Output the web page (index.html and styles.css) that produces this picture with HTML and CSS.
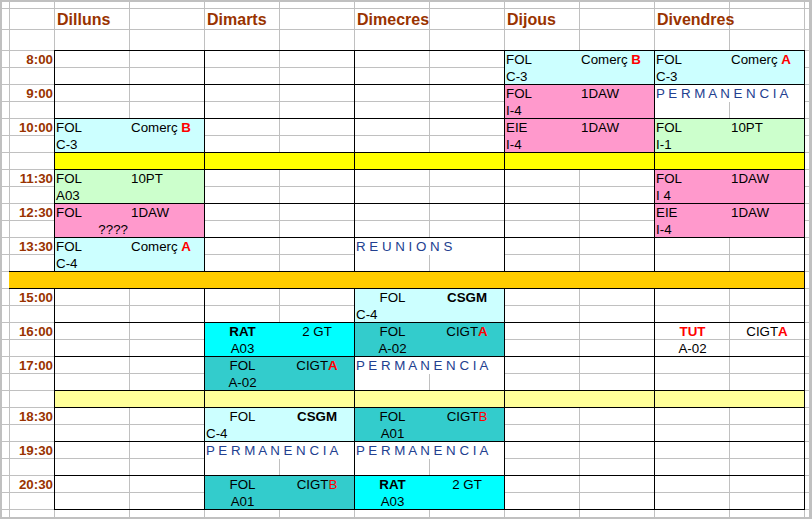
FILE: index.html
```html
<!DOCTYPE html>
<html lang="ca">
<head>
<meta charset="utf-8">
<title>Horari</title>
<link rel="stylesheet" href="styles.css">
</head>
<body>
<div class="sheet">
  <div class="days">
    <div class="day">Dilluns</div>
    <div class="day">Dimarts</div>
    <div class="day">Dimecres</div>
    <div class="day">Dijous</div>
    <div class="day">Divendres</div>
  </div>

  <div class="week">
    <!-- 8:00 -->
    <div class="time">8:00</div>
    <div class="slot"></div>
    <div class="slot"></div>
    <div class="slot"></div>
    <div class="slot lcyan"><span>FOL</span><span>Comerç <b class="r">B</b></span><span>C-3</span></div>
    <div class="slot lcyan"><span>FOL</span><span>Comerç <b class="r">A</b></span><span>C-3</span></div>

    <!-- 9:00 -->
    <div class="time">9:00</div>
    <div class="slot"></div>
    <div class="slot"></div>
    <div class="slot"></div>
    <div class="slot pink"><span>FOL</span><span>1DAW</span><span>I-4</span></div>
    <div class="slot"><span class="wide note">P E R M A N E N C I A</span></div>

    <!-- 10:00 -->
    <div class="time">10:00</div>
    <div class="slot lcyan"><span>FOL</span><span>Comerç <b class="r">B</b></span><span>C-3</span></div>
    <div class="slot"></div>
    <div class="slot"></div>
    <div class="slot pink"><span>EIE</span><span>1DAW</span><span>I-4</span></div>
    <div class="slot green"><span>FOL</span><span>10PT</span><span>I-1</span></div>

    <!-- pati -->
    <div class="time"></div>
    <div class="brk yellow"></div>
    <div class="brk yellow"></div>
    <div class="brk yellow"></div>
    <div class="brk yellow"></div>
    <div class="brk yellow"></div>

    <!-- 11:30 -->
    <div class="time">11:30</div>
    <div class="slot green"><span>FOL</span><span>10PT</span><span>A03</span></div>
    <div class="slot"></div>
    <div class="slot"></div>
    <div class="slot"></div>
    <div class="slot pink"><span>FOL</span><span>1DAW</span><span>I 4</span></div>

    <!-- 12:30 -->
    <div class="time">12:30</div>
    <div class="slot pink"><span>FOL</span><span>1DAW</span><span class="end">????</span></div>
    <div class="slot"></div>
    <div class="slot"></div>
    <div class="slot"></div>
    <div class="slot pink"><span>EIE</span><span>1DAW</span><span>I-4</span></div>

    <!-- 13:30 -->
    <div class="time">13:30</div>
    <div class="slot lcyan"><span>FOL</span><span>Comerç <b class="r">A</b></span><span>C-4</span></div>
    <div class="slot"></div>
    <div class="slot"><span class="wide note">R E U N I O N S</span></div>
    <div class="slot"></div>
    <div class="slot"></div>

    <!-- dinar -->
    <div class="lunch"></div>

    <!-- 15:00 -->
    <div class="time">15:00</div>
    <div class="slot"></div>
    <div class="slot"></div>
    <div class="slot lcyan"><span class="mid">FOL</span><span class="mid"><b>CSGM</b></span><span>C-4</span></div>
    <div class="slot"></div>
    <div class="slot"></div>

    <!-- 16:00 -->
    <div class="time">16:00</div>
    <div class="slot"></div>
    <div class="slot cyan"><span class="mid"><b>RAT</b></span><span class="mid">2 GT</span><span class="mid">A03</span></div>
    <div class="slot teal"><span class="mid">FOL</span><span class="mid">CIGT<b class="r">A</b></span><span class="mid">A-02</span></div>
    <div class="slot"></div>
    <div class="slot"><span class="mid"><b class="r">TUT</b></span><span class="mid">CIGT<b class="r">A</b></span><span class="mid">A-02</span></div>

    <!-- 17:00 -->
    <div class="time">17:00</div>
    <div class="slot"></div>
    <div class="slot teal"><span class="mid">FOL</span><span class="mid">CIGT<b class="r">A</b></span><span class="mid">A-02</span></div>
    <div class="slot"><span class="wide note">P E R M A N E N C I A</span></div>
    <div class="slot"></div>
    <div class="slot"></div>

    <!-- pati tarda -->
    <div class="time"></div>
    <div class="brk lyellow"></div>
    <div class="brk lyellow"></div>
    <div class="brk lyellow"></div>
    <div class="brk lyellow"></div>
    <div class="brk lyellow"></div>

    <!-- 18:30 -->
    <div class="time">18:30</div>
    <div class="slot"></div>
    <div class="slot lcyan"><span class="mid">FOL</span><span class="mid"><b>CSGM</b></span><span>C-4</span></div>
    <div class="slot teal"><span class="mid">FOL</span><span class="mid">CIGT<span class="r">B</span></span><span class="mid">A01</span></div>
    <div class="slot"></div>
    <div class="slot"></div>

    <!-- 19:30 -->
    <div class="time">19:30</div>
    <div class="slot"></div>
    <div class="slot"><span class="wide note">P E R M A N E N C I A</span></div>
    <div class="slot"><span class="wide note">P E R M A N E N C I A</span></div>
    <div class="slot"></div>
    <div class="slot"></div>

    <!-- 20:30 -->
    <div class="time">20:30</div>
    <div class="slot"></div>
    <div class="slot teal"><span class="mid">FOL</span><span class="mid">CIGT<span class="r">B</span></span><span class="mid">A01</span></div>
    <div class="slot cyan"><span class="mid"><b>RAT</b></span><span class="mid">2 GT</span><span class="mid">A03</span></div>
    <div class="slot"></div>
    <div class="slot"></div>
  </div>
</div>
</body>
</html>
```

FILE: styles.css
```css
* {
  box-sizing: border-box;
}

html, body {
  margin: 0;
  padding: 0;
  background: #ffffff;
}

body {
  font-family: "Liberation Sans", Arial, sans-serif;
  font-size: 13.33px;
  color: #000000;
}

/* spreadsheet sheet with its gridlines */
.sheet {
  width: 812px;
  height: 519px;
  border: solid #c0c0c0;
  border-width: 2px 3px 2px 2px;
  display: grid;
  grid-template-columns: 8px 45px 750px 4px;
  grid-template-rows: 7px 42px 459px 7px;
  background-color: #ffffff;
  background-image:
    linear-gradient(90deg, transparent 74px, #c0c0c0 74px),
    linear-gradient(#c0c0c0, #c0c0c0),
    repeating-linear-gradient(180deg, #c0c0c0 0 1px, transparent 1px 17px),
    linear-gradient(#c0c0c0, #c0c0c0),
    linear-gradient(#c0c0c0, #c0c0c0);
  background-size:
    75px 100%,
    1px 100%,
    100% 460px,
    100% 1px,
    100% 1px;
  background-position:
    53px 0,
    7px 0,
    0 48px,
    0 6px,
    0 27px;
  background-repeat:
    repeat-x,
    no-repeat,
    no-repeat,
    no-repeat,
    no-repeat;
}

/* day headers */
.days {
  grid-column: 3;
  grid-row: 2;
  display: grid;
  grid-template-columns: repeat(5, 150px);
  grid-template-rows: 21px;
}

.day {
  display: flex;
  align-items: flex-end;
  padding: 0 0 1px 2px;
  font-size: 16px;
  font-weight: bold;
  line-height: 18px;
  color: #993300;
  white-space: nowrap;
}

/* timetable body */
.week {
  grid-column: 2 / 4;
  grid-row: 3;
  display: grid;
  grid-template-columns: 45px repeat(5, 150px);
  grid-template-rows:
    34px 34px 34px 17px
    34px 34px 34px 17px
    34px 34px 34px 17px
    34px 34px 34px;
}

.time {
  padding: 0 2px 0 0;
  line-height: 17px;
  text-align: right;
  font-weight: bold;
  color: #993300;
}

.slot {
  margin: -1px 0 0 -1px;
  border: 1px solid #000000;
  display: grid;
  grid-template-columns: 75px 74px;
  grid-template-rows: 17px 16px;
}

.slot > span {
  padding: 0 0 0 1px;
  line-height: 17px;
  white-space: nowrap;
}

.slot > .mid {
  text-align: center;
  padding-left: 0;
}

.slot > .end {
  text-align: right;
  padding-right: 2px;
}

.slot > .wide {
  grid-column: 1 / -1;
  background: #ffffff;
}

.note {
  color: #22408f;
}

.brk {
  margin: -1px 0 0 -1px;
  border: 1px solid #000000;
}

.lunch {
  grid-column: 1 / -1;
  margin: -1px 0 0 -1px;
  border: solid #000000;
  border-width: 1px 1px 1px 0;
  background: #ffcc00;
}

.r {
  color: #ff0000;
}

.lcyan { background: #ccffff; }
.cyan { background: #00ffff; }
.teal { background: #33cccc; }
.pink { background: #ff99cc; }
.green { background: #ccffcc; }
.yellow { background: #ffff00; }
.lyellow { background: #ffff99; }
```
